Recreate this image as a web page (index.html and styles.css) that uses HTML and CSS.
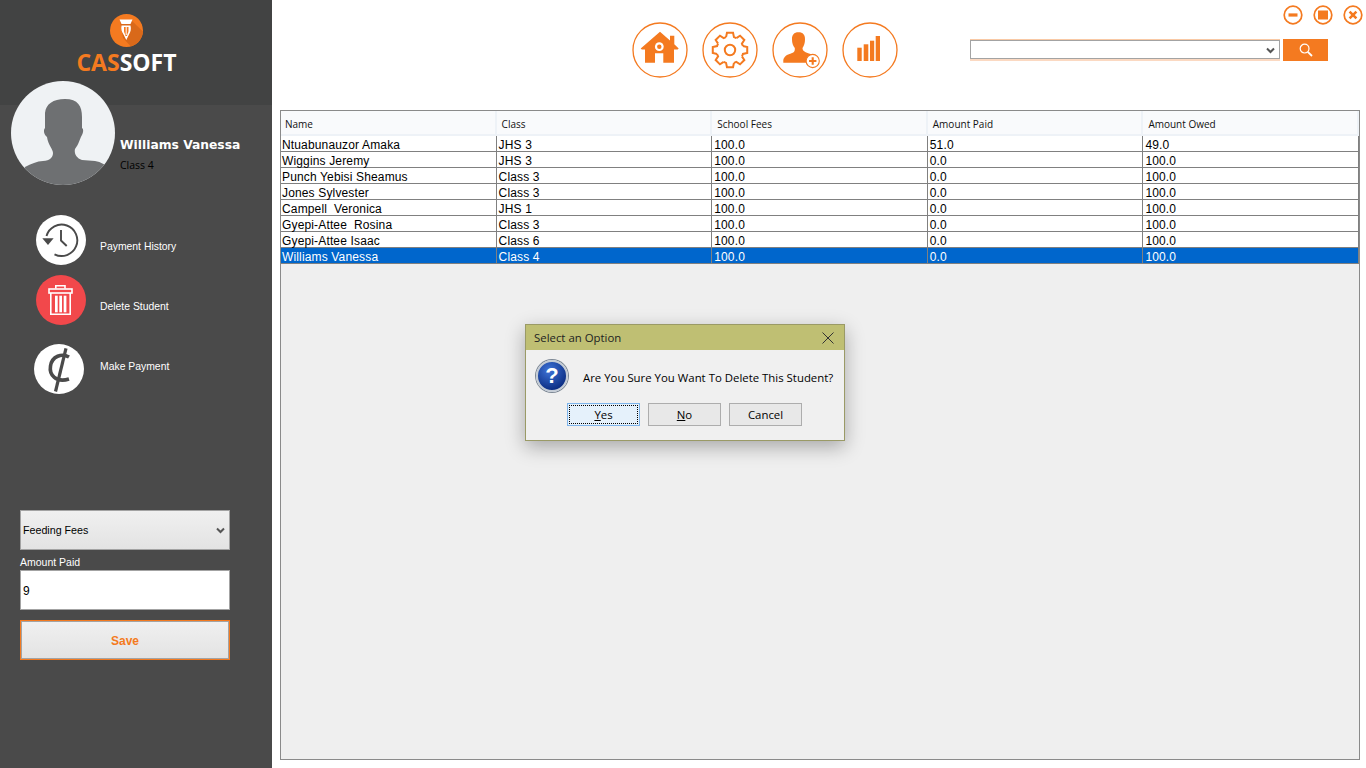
FILE: index.html
```html
<!DOCTYPE html>
<html>
<head>
  <title>Cassoft</title>
  <link rel="stylesheet" href="styles.css">
</head>
<body>
  <div class="app">
    <!-- left panel -->
    <aside class="sidebar">
      <div class="brand">
        <svg class="brand-mark" width="40" height="38" viewBox="0 0 40 38">
          <defs><clipPath id="disc"><circle cx="16.5" cy="16.5" r="16.5"/></clipPath></defs>
          <circle cx="16.5" cy="16.5" r="16.5" fill="#f47a20"/>
          <path d="M10 7 L22 7 L40 24 L40 38 L26 38 L13 24 Z" fill="#d9691a" clip-path="url(#disc)"/>
          <path d="M9.5 5.5 H22.5 L20.5 10 H11.5 Z" fill="#fff"/>
          <path d="M11.5 11.5 H20.5 C21.5 15 20.5 18 19 20.5 L16.3 26 L13.5 20.5 C11.8 18 10.8 15 11.5 11.5 Z" fill="#fff"/>
          <path d="M14 13 H18.5 V17 C18.5 19 17.2 19.5 17 22 H15.5 C15.3 19.5 14 19 14 17 Z" fill="#f47a20"/>
          <path d="M16.2 13 V21" stroke="#fff" stroke-width="1"/>
        </svg>
        <div class="brand-name"><span class="brand-cas">CAS</span>SOFT</div>
      </div>

      <div class="profile">
        <svg class="avatar" width="104" height="104" viewBox="0 0 104 104">
          <defs><clipPath id="face"><circle cx="52" cy="52" r="52"/></clipPath></defs>
          <circle cx="52" cy="52" r="52" fill="#eff2f4"/>
          <path clip-path="url(#face)" fill="#6e7072" d="M54 18 C67 18 71 25 71 36 L71 47 C73 48 72 52 71 54 C69 57 68 63 64 68 C63 72 65 77 71 79 L84 80 C90 81 95 84 100 88 L100 110 L4 110 L14 86 C20 83 26 80 32 80 C39 80 42 76 42 72 C42 68 37 64 36 56 C33 54 32 49 34 47 L34 32 C35 23 42 18 54 18 Z"/>
        </svg>
        <div class="profile-text">
          <div class="student-name">Williams Vanessa</div>
          <div class="student-class">Class 4</div>
        </div>
      </div>

      <div class="actions">
        <div class="action">
          <svg class="action-icon" width="50" height="50" viewBox="0 0 50 50">
            <circle cx="25" cy="25" r="25" fill="#fff"/>
            <path d="M10.5 21 A15.7 15.7 0 1 1 18.5 39.3" fill="none" stroke="#4a4a4a" stroke-width="1.9"/>
            <path d="M6.3 23.2 H17.6 L12 30 Z" fill="#4a4a4a"/>
            <path d="M25 15 V25.5 L30.7 31" fill="none" stroke="#4a4a4a" stroke-width="1.9"/>
          </svg>
          <span class="action-label">Payment History</span>
        </div>
        <div class="action">
          <svg class="action-icon" width="50" height="50" viewBox="0 0 50 50">
            <circle cx="25" cy="25" r="25" fill="#f2484b"/>
            <g fill="none" stroke="#fff" stroke-width="1.6">
              <path d="M19.8 13.6 V10.8 H29 V13.6"/>
              <rect x="13" y="14" width="23" height="4"/>
              <path d="M14.8 18 V39.3 H34.2 V18"/>
            </g>
            <g fill="#fff">
              <rect x="19" y="20.7" width="2.7" height="16.6"/>
              <rect x="23.3" y="20.7" width="2.7" height="16.6"/>
              <rect x="27.7" y="20.7" width="2.7" height="16.6"/>
            </g>
          </svg>
          <span class="action-label">Delete Student</span>
        </div>
        <div class="action action-pay">
          <svg class="action-icon" width="50" height="50" viewBox="0 0 50 50">
            <circle cx="25" cy="25" r="25" fill="#fff"/>
            <path d="M35 13 C28 9 18 12 16.5 22 C15 31 22 39 35 35" fill="none" stroke="#4a4a4a" stroke-width="3.6"/>
            <path d="M32 4.3 L21.5 47.5" fill="none" stroke="#4a4a4a" stroke-width="3.2"/>
          </svg>
          <span class="action-label">Make Payment</span>
        </div>
      </div>

      <form class="pay-form">
        <div class="select-wrap">
          <select class="fee-select">
            <option>Feeding Fees</option>
          </select>
          <svg class="chevron" width="9" height="7" viewBox="0 0 9 7"><path d="M1 1.5 L4.5 5 L8 1.5" fill="none" stroke="#555" stroke-width="2"/></svg>
        </div>
        <label class="amount-label">Amount Paid</label>
        <input class="amount-input" type="text" value="9">
        <button class="save-button" type="button">Save</button>
      </form>
    </aside>

    <!-- right panel -->
    <main class="content">
      <header class="topbar">
        <nav class="nav-icons">
          <svg class="nav-icon" viewBox="0 0 56 56">
            <circle class="nav-ring" cx="28" cy="28" r="27"/>
            <path class="solid" d="M28 9.7 L38 18.4 V13.7 H42.3 V22.2 L46.7 26.5 L45.6 27.6 H42 V40.7 H31.3 V31.3 H23 V40.7 H13 V27.6 H9.8 L8.7 26.5 Z"/>
            <circle cx="27.3" cy="24.7" r="4.4" fill="#fff"/>
            <circle cx="27.3" cy="24.7" r="2.2" class="solid"/>
          </svg>
          <svg class="nav-icon" viewBox="0 0 56 56">
            <defs>
              <path id="tooth" d="M40.91 24.05 L45.23 24.96 V31.04 L40.91 31.95 A13.5 13.5 0 0 1 39.92 34.34"/>
            </defs>
            <circle class="nav-ring" cx="28" cy="28" r="27"/>
            <g class="outline">
              <use href="#tooth"/>
              <use href="#tooth" transform="rotate(45 28 28)"/>
              <use href="#tooth" transform="rotate(90 28 28)"/>
              <use href="#tooth" transform="rotate(135 28 28)"/>
              <use href="#tooth" transform="rotate(180 28 28)"/>
              <use href="#tooth" transform="rotate(225 28 28)"/>
              <use href="#tooth" transform="rotate(270 28 28)"/>
              <use href="#tooth" transform="rotate(315 28 28)"/>
              <circle cx="28" cy="28" r="5.2"/>
            </g>
          </svg>
          <svg class="nav-icon" viewBox="0 0 56 56">
            <circle class="nav-ring" cx="28" cy="28" r="27"/>
            <path class="solid" d="M26.5 10.3 C31 10.3 33.2 13 33 17.5 C33 21 32 24 30.5 26 C30.5 29 33 30 37 31.5 C40 32.5 42 34 43 37 V40.7 H11.3 V38 C12 34.5 15 32.5 19 31.5 C22 30.5 23 29.5 22.8 26 C21 24 20 21 20 17.5 C19.8 13 22 10.3 26.5 10.3 Z"/>
            <circle cx="40.7" cy="39" r="6.6" fill="#fff" stroke="#f47a20" stroke-width="1.1"/>
            <path d="M40.7 35.3 V42.7 M37 39 H44.4" stroke="#f47a20" stroke-width="2.1"/>
          </svg>
          <svg class="nav-icon" viewBox="0 0 56 56">
            <circle class="nav-ring" cx="28" cy="28" r="27"/>
            <rect class="solid" x="15.3" y="25.7" width="4.4" height="13.3"/>
            <rect class="solid" x="21.7" y="22.3" width="4.6" height="16.7"/>
            <rect class="solid" x="28" y="18.7" width="4.2" height="20.3"/>
            <rect class="solid" x="33.7" y="14" width="4.3" height="25"/>
          </svg>
        </nav>

        <div class="top-right">
          <div class="window-controls">
            <svg class="win-icon" viewBox="0 0 20 20"><circle class="win-ring" cx="10" cy="10" r="8.8"/><rect class="solid" x="5.5" y="8.4" width="9" height="3.2"/></svg>
            <svg class="win-icon" viewBox="0 0 20 20"><circle class="win-ring" cx="10" cy="10" r="8.8"/><rect class="solid" x="5" y="5.5" width="10" height="9"/></svg>
            <svg class="win-icon" viewBox="0 0 20 20"><circle class="win-ring" cx="10" cy="10" r="8.8"/><path d="M6.6 6.6 L13.4 13.4 M13.4 6.6 L6.6 13.4" stroke="#f47a20" stroke-width="2.6"/></svg>
          </div>
          <div class="search">
            <div class="search-box">
              <input class="search-input" type="text">
              <svg class="chevron" width="9" height="7" viewBox="0 0 9 7"><path d="M1 1.5 L4.5 5 L8 1.5" fill="none" stroke="#555" stroke-width="2"/></svg>
            </div>
            <button class="search-button" type="button">
              <svg width="14" height="14" viewBox="0 0 14 14"><circle cx="5.6" cy="5.6" r="4.4" fill="none" stroke="#fff" stroke-width="1.2"/><path d="M8.8 8.8 L13 13" stroke="#fff" stroke-width="1.8"/></svg>
            </button>
          </div>
        </div>
      </header>

      <section class="table-panel">
        <table class="students">
          <thead>
            <tr><th>Name</th><th>Class</th><th>School Fees</th><th>Amount Paid</th><th>Amount Owed</th></tr>
          </thead>
          <tbody>
            <tr><td>Ntuabunauzor Amaka</td><td>JHS 3</td><td>100.0</td><td>51.0</td><td>49.0</td></tr>
            <tr><td>Wiggins Jeremy</td><td>JHS 3</td><td>100.0</td><td>0.0</td><td>100.0</td></tr>
            <tr><td>Punch Yebisi Sheamus</td><td>Class 3</td><td>100.0</td><td>0.0</td><td>100.0</td></tr>
            <tr><td>Jones Sylvester</td><td>Class 3</td><td>100.0</td><td>0.0</td><td>100.0</td></tr>
            <tr><td>Campell&nbsp; Veronica</td><td>JHS 1</td><td>100.0</td><td>0.0</td><td>100.0</td></tr>
            <tr><td>Gyepi-Attee&nbsp; Rosina</td><td>Class 3</td><td>100.0</td><td>0.0</td><td>100.0</td></tr>
            <tr><td>Gyepi-Attee Isaac</td><td>Class 6</td><td>100.0</td><td>0.0</td><td>100.0</td></tr>
            <tr class="selected"><td>Williams Vanessa</td><td>Class 4</td><td>100.0</td><td>0.0</td><td>100.0</td></tr>
          </tbody>
        </table>
      </section>
    </main>

    <!-- confirm dialog -->
    <div class="dialog">
      <div class="dialog-title">
        <span>Select an Option</span>
        <svg width="12" height="12" viewBox="0 0 12 12"><path d="M0.5 0.5 L11.5 11.5 M11.5 0.5 L0.5 11.5" stroke="#333" stroke-width="1"/></svg>
      </div>
      <div class="dialog-body">
        <div class="dialog-message">
          <div class="question-icon">?</div>
          <span class="message-text">Are You Sure You Want To Delete This Student?</span>
        </div>
        <div class="dialog-buttons">
          <button class="dialog-button default-button" type="button"><span class="focus-box"><u>Y</u>es</span></button>
          <button class="dialog-button" type="button"><u>N</u>o</button>
          <button class="dialog-button" type="button">Cancel</button>
        </div>
      </div>
    </div>
  </div>
</body>
</html>
```

FILE: styles.css
```css
/* page */
html, body {
  margin: 0;
  height: 100%;
  overflow: hidden;
}
body {
  font-family: "Liberation Sans", Arial, sans-serif;
  background-color: #fff;
}
.app {
  position: relative;
  display: flex;
  height: 768px;
}

/* left panel */
.sidebar {
  width: 272px;
  flex-shrink: 0;
  background-color: #4a4a4a;
  display: flex;
  flex-direction: column;
}
.brand {
  height: 105px;
  box-sizing: border-box;
  padding: 14px 19px 0 0;
  background-color: #424343;
  display: flex;
  flex-direction: column;
  align-items: center;
}
.brand-mark {
  display: block;
  margin-left: 7px;
  height: 38px;
}
.brand-name {
  margin-top: -6px;
  font-family: "Open Sans", sans-serif;
  font-size: 23px;
  font-weight: 700;
  line-height: 32px;
  color: #fff;
}
.brand-cas {
  color: #f47a20;
}
.profile {
  display: flex;
  margin-top: -24px;
  padding-left: 11px;
}
.avatar {
  display: block;
  flex-shrink: 0;
}
.profile-text {
  margin-left: 5px;
  padding-top: 55px;
}
.student-name {
  font-family: "DejaVu Sans", sans-serif;
  font-size: 12.3px;
  font-weight: 700;
  line-height: 18px;
  color: #fff;
}
.student-class {
  margin-top: 3px;
  font-family: "Open Sans", sans-serif;
  font-size: 10.5px;
  line-height: 16px;
  color: #000;
}
.actions {
  margin-top: 30px;
  padding-left: 36px;
  display: flex;
  flex-direction: column;
  gap: 10px;
}
.action {
  display: flex;
  align-items: center;
  height: 50px;
}
.action-icon {
  display: block;
  flex-shrink: 0;
}
.action-label {
  margin-left: 14px;
  margin-top: 12px;
  font-size: 10.4px;
  color: #fff;
}
.action-pay {
  margin-top: 9px;
  margin-left: -2px;
}
.action-pay .action-label {
  margin-left: 16px;
  margin-top: -6px;
}
.pay-form {
  margin-top: 116px;
  padding-left: 20px;
  width: 210px;
  display: flex;
  flex-direction: column;
}
.select-wrap {
  position: relative;
  height: 40px;
}
.select-wrap .chevron {
  position: absolute;
  right: 5px;
  top: 17px;
}
.fee-select {
  width: 100%;
  height: 100%;
  box-sizing: border-box;
  padding: 0 2px;
  appearance: none;
  border: 1px solid #a3a3a3;
  border-radius: 0;
  background: linear-gradient(#f0f0f0, #e3e3e3);
  font-family: "Liberation Sans", Arial, sans-serif;
  font-size: 10.7px;
  color: #000;
}
.amount-label {
  margin-top: 4px;
  font-size: 10.5px;
  line-height: 16px;
  color: #fff;
}
.amount-input {
  height: 40px;
  box-sizing: border-box;
  padding: 2px 2px 0;
  border: 1px solid #a3a3a3;
  border-radius: 0;
  background-color: #fff;
  font-family: "Liberation Sans", Arial, sans-serif;
  font-size: 12px;
  color: #000;
}
.save-button {
  margin-top: 10px;
  height: 40px;
  box-sizing: border-box;
  padding: 2px 0 0;
  border: 1px solid #a3a3a3;
  outline: 1px solid #f47a20;
  outline-offset: -1px;
  box-shadow: inset 0 0 0 1px #a3a3a3;
  background: linear-gradient(#f0f0f0, #e3e3e3);
  font-family: "Liberation Sans", Arial, sans-serif;
  font-size: 12px;
  font-weight: 700;
  color: #f47a20;
}

/* right panel */
.content {
  flex: 1;
  display: flex;
  flex-direction: column;
  padding: 0 6px 8px 8px;
  min-width: 0;
}
.topbar {
  height: 110px;
  flex-shrink: 0;
  display: flex;
}
.nav-icons {
  display: flex;
  gap: 14px;
  margin-left: 352px;
  padding-top: 22px;
}
.nav-icon {
  display: block;
  width: 56px;
  height: 56px;
}
.nav-ring {
  fill: none;
  stroke: #f47a20;
  stroke-width: 1.3;
}
.solid {
  fill: #f47a20;
}
.outline {
  fill: none;
  stroke: #f47a20;
  stroke-width: 2;
}
.top-right {
  margin-left: auto;
  margin-right: -3px;
  width: 393px;
  display: flex;
  flex-direction: column;
}
.window-controls {
  display: flex;
  justify-content: flex-end;
  gap: 10px;
  padding-top: 5px;
}
.win-icon {
  display: block;
  width: 20px;
  height: 20px;
}
.win-ring {
  fill: none;
  stroke: #f47a20;
  stroke-width: 1.7;
}
.search {
  display: flex;
  margin-top: 14px;
  gap: 3px;
}
.search-box {
  position: relative;
  width: 310px;
  height: 22px;
  box-sizing: border-box;
  border-top: 1px solid #f9c9a5;
  border-bottom: 2px solid #fbd9c2;
}
.search-box .chevron {
  position: absolute;
  right: 5px;
  top: 7px;
}
.search-input {
  display: block;
  width: 100%;
  height: 19px;
  box-sizing: border-box;
  padding: 0 2px;
  border: 1px solid #a3a3a3;
  background-color: #fff;
  outline: none;
}
.search-button {
  width: 45px;
  height: 22px;
  padding: 0;
  border: none;
  background-color: #f47a20;
  display: flex;
  align-items: center;
  justify-content: center;
}

/* students table */
.table-panel {
  flex: 1;
  border: 1px solid #8a8a8a;
  background-color: #efefef;
  min-height: 0;
}
.students {
  width: 1078px;
  table-layout: fixed;
  border-collapse: separate;
  border-spacing: 0;
  font-size: 12px;
}
.students th {
  height: 25px;
  box-sizing: border-box;
  padding: 3px 0 0 5px;
  background-color: #f9fafc;
  border-right: 2px solid #eef2f7;
  border-bottom: 2px solid #eef2f7;
  text-align: left;
  font-family: "Open Sans", sans-serif;
  font-size: 10px;
  font-weight: 400;
  color: #111;
}
.students th:first-child {
  padding-left: 4px;
}
.students td {
  height: 16px;
  box-sizing: border-box;
  padding: 3px 0 0 2px;
  background-color: #fff;
  border-right: 1px solid #808080;
  border-bottom: 1px solid #808080;
  line-height: 12px;
  letter-spacing: 0.15px;
  color: #000;
  white-space: nowrap;
}
.students td:first-child {
  padding-left: 1px;
}
.students .selected td {
  background-color: #0066cc;
  color: #fff;
}

/* confirm dialog */
.dialog {
  position: absolute;
  left: 525px;
  top: 324px;
  width: 320px;
  height: 117px;
  box-sizing: border-box;
  border: 1px solid #9a9a66;
  background-color: #f0f0f0;
  box-shadow: 0 6px 18px rgba(0, 0, 0, 0.3);
  font-family: "Open Sans", sans-serif;
  font-size: 11.4px;
  color: #000;
}
.dialog-title {
  height: 25px;
  box-sizing: border-box;
  padding: 0 10px 0 8px;
  background-color: #bfbf73;
  color: #222;
  display: flex;
  align-items: center;
  justify-content: space-between;
}
.dialog-body {
  padding: 10px 0 0 10px;
}
.dialog-message {
  display: flex;
  align-items: center;
  gap: 15px;
  height: 32px;
}
.message-text {
  white-space: nowrap;
  padding-top: 2px;
}
.question-icon {
  width: 32px;
  height: 32px;
  flex-shrink: 0;
  box-sizing: border-box;
  border: 2px solid #c4ccd6;
  border-radius: 50%;
  background: radial-gradient(circle at 40% 30%, #3f74d8, #0d2f85 75%);
  box-shadow: 0 0 0 1px #7c8794;
  color: #fff;
  font-family: "Liberation Sans", Arial, sans-serif;
  font-size: 22px;
  font-weight: 700;
  line-height: 28px;
  text-align: center;
}
.dialog-buttons {
  display: flex;
  gap: 8px;
  margin-top: 11px;
  padding-left: 31px;
}
.dialog-button {
  width: 73px;
  height: 23px;
  box-sizing: border-box;
  padding: 0;
  border: 1px solid #adadad;
  background-color: #e8e8e8;
  font-family: "Open Sans", sans-serif;
  font-size: 11.4px;
  color: #000;
}
.default-button {
  padding: 1px;
  border-color: #7eb4ea;
  background-color: #e5f1fb;
}
.focus-box {
  display: flex;
  align-items: center;
  justify-content: center;
  height: 100%;
  box-sizing: border-box;
  border: 1px dotted #000;
}
```
